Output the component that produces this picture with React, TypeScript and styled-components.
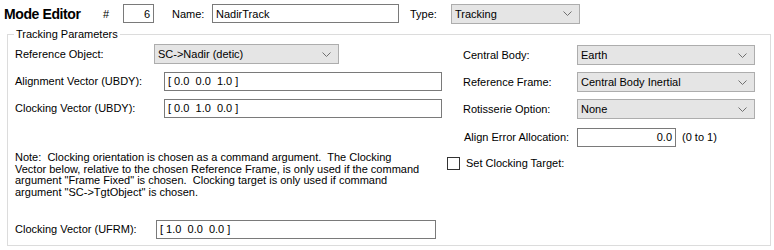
import React from "react";
import styled, { createGlobalStyle } from "styled-components";

const GlobalStyle = createGlobalStyle`
  html, body {
    margin: 0;
    padding: 0;
    background: #ffffff;
  }
  body {
    font-family: "Liberation Sans", Arial, sans-serif;
    font-size: 11px;
    color: #000000;
  }
`;

const Page = styled.div`
  width: 774px;
  height: 250px;
  box-sizing: border-box;
  padding-top: 3px;
  overflow: hidden;
`;

const HeaderRow = styled.div`
  display: flex;
  align-items: center;
  height: 21px;
  padding-left: 4px;
`;

const Title = styled.div`
  width: 99px;
  font-size: 14px;
  font-weight: 700;
  letter-spacing: -0.4px;
`;

const Label = styled.span<{ $w?: number; $ml?: number }>`
  display: inline-block;
  flex: none;
  width: ${(p) => (p.$w ? `${p.$w}px` : "auto")};
  margin-left: ${(p) => p.$ml ?? 0}px;
  white-space: nowrap;
`;

const TextBox = styled.div<{ $w: number; $right?: boolean }>`
  flex: none;
  box-sizing: border-box;
  width: ${(p) => p.$w}px;
  height: 19px;
  border: 1px solid #7a7a7a;
  background: #ffffff;
  display: flex;
  align-items: center;
  justify-content: ${(p) => (p.$right ? "flex-end" : "flex-start")};
  padding: 0 3px;
  white-space: pre;
`;

const SelectBox = styled.div<{ $w: number }>`
  flex: none;
  box-sizing: border-box;
  width: ${(p) => p.$w}px;
  height: 20px;
  border: 1px solid #adadad;
  background: #e5e5e5;
  display: flex;
  align-items: center;
  justify-content: space-between;
  padding: 0 7px 0 3px;
  white-space: nowrap;
`;

const Group = styled.fieldset`
  margin: 4px 0 0 7px;
  width: 764px;
  box-sizing: border-box;
  border: 1px solid #dcdcdc;
  padding: 3px 0 6px 7px;
  min-width: 0;
`;

const Legend = styled.legend`
  margin-left: -1px;
  padding: 0 2px;
  font-size: 11px;
  line-height: 13px;
`;

const Columns = styled.div`
  display: grid;
  grid-template-columns: 432px 1fr;
`;

const Column = styled.div`
  display: flex;
  flex-direction: column;
`;

const Row = styled.div<{ $mt?: number }>`
  display: flex;
  align-items: center;
  height: 20px;
  margin-top: ${(p) => p.$mt ?? 0}px;
`;

const Note = styled.div<{ $mt: number }>`
  margin-top: ${(p) => p.$mt}px;
  line-height: 11.5px;
  white-space: pre;
`;

const Check = styled.span`
  flex: none;
  box-sizing: border-box;
  width: 13px;
  height: 13px;
  border: 1px solid #333333;
  background: #ffffff;
  margin-right: 6px;
`;

const Chevron = () => (
  <svg width="9" height="5" viewBox="0 0 9 5">
    <path d="M0.5 0.5 L4.5 4.5 L8.5 0.5" fill="none" stroke="#707070" strokeWidth="1" />
  </svg>
);

const Select = ({ w, value }: { w: number; value: string }) => (
  <SelectBox $w={w}>
    <span>{value}</span>
    <Chevron />
  </SelectBox>
);

const App: React.FC = () => {
  return (
    <Page>
      <GlobalStyle />
      <HeaderRow>
        <Title>Mode Editor</Title>
        <Label $w={20}>#</Label>
        <TextBox $w={31} $right>6</TextBox>
        <Label $w={40} $ml={18}>Name:</Label>
        <TextBox $w={187}>NadirTrack</TextBox>
        <Label $w={41} $ml={11}>Type:</Label>
        <Select w={129} value="Tracking" />
      </HeaderRow>

      <Group>
        <Legend>Tracking Parameters</Legend>
        <Columns>
          <Column>
            <Row>
              <Label $w={139}>Reference Object:</Label>
              <Select w={185} value="SC->Nadir (detic)" />
            </Row>
            <Row $mt={7}>
              <Label $w={149}>Alignment Vector (UBDY):</Label>
              <TextBox $w={278}>{"[ 0.0  0.0  1.0 ]"}</TextBox>
            </Row>
            <Row $mt={7}>
              <Label $w={149}>Clocking Vector (UBDY):</Label>
              <TextBox $w={278}>{"[ 0.0  1.0  0.0 ]"}</TextBox>
            </Row>
            <Note $mt={34}>
              {"Note:  Clocking orientation is chosen as a command argument.  The Clocking\n" +
                "Vector below, relative to the chosen Reference Frame, is only used if the command\n" +
                "argument \"Frame Fixed\" is chosen.  Clocking target is only used if command\n" +
                "argument \"SC->TgtObject\" is chosen."}
            </Note>
            <Row $mt={21}>
              <Label $w={141}>Clocking Vector (UFRM):</Label>
              <TextBox $w={280}>{"[ 1.0  0.0  0.0 ]"}</TextBox>
            </Row>
          </Column>

          <Column>
            <Row $mt={1}>
              <Label $w={114} $ml={16}>Central Body:</Label>
              <Select w={178} value="Earth" />
            </Row>
            <Row $mt={7}>
              <Label $w={114} $ml={16}>Reference Frame:</Label>
              <Select w={178} value="Central Body Inertial" />
            </Row>
            <Row $mt={7}>
              <Label $w={114} $ml={16}>Rotisserie Option:</Label>
              <Select w={178} value="None" />
            </Row>
            <Row $mt={8}>
              <Label $w={113} $ml={17}>Align Error Allocation:</Label>
              <TextBox $w={99} $right>0.0</TextBox>
              <Label $ml={6}>(0 to 1)</Label>
            </Row>
            <Row $mt={6}>
              <Check />
              <Label>Set Clocking Target:</Label>
            </Row>
          </Column>
        </Columns>
      </Group>
    </Page>
  );
};

export default App;
